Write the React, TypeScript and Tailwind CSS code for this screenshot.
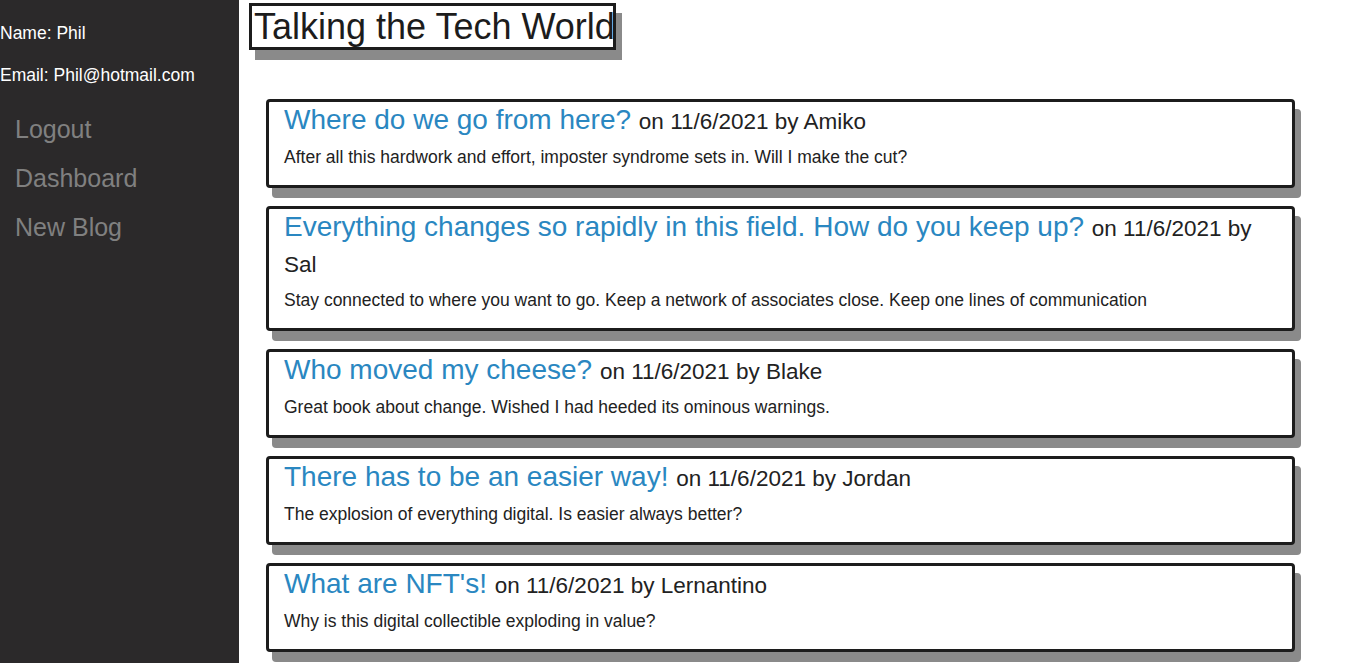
import React from "react";

interface Post {
  title: string;
  date: string;
  author: string;
  body: string;
}

const posts: Post[] = [
  {
    title: "Where do we go from here?",
    date: "11/6/2021",
    author: "Amiko",
    body: "After all this hardwork and effort, imposter syndrome sets in. Will I make the cut?",
  },
  {
    title: "Everything changes so rapidly in this field. How do you keep up?",
    date: "11/6/2021",
    author: "Sal",
    body: "Stay connected to where you want to go. Keep a network of associates close. Keep one lines of communication",
  },
  {
    title: "Who moved my cheese?",
    date: "11/6/2021",
    author: "Blake",
    body: "Great book about change. Wished I had heeded its ominous warnings.",
  },
  {
    title: "There has to be an easier way!",
    date: "11/6/2021",
    author: "Jordan",
    body: "The explosion of everything digital. Is easier always better?",
  },
  {
    title: "What are NFT's!",
    date: "11/6/2021",
    author: "Lernantino",
    body: "Why is this digital collectible exploding in value?",
  },
];

export default function App() {
  return (
    <div className="flex min-h-screen font-['Liberation_Sans',Arial,sans-serif] text-[#222]">
      {/* Sidebar */}
      <aside className="w-[239px] shrink-0 bg-[#2b292a] text-white">
        <p className="pt-[23px] text-[17.5px] leading-[20px]">Name: Phil</p>
        <p className="mt-[22px] text-[17.5px] leading-[20px]">Email: Phil@hotmail.com</p>
        <nav className="mt-[20px] flex flex-col pl-[15px]">
          {["Logout", "Dashboard", "New Blog"].map((l) => (
            <a key={l} href="#" className="text-[25px] leading-[49px] text-[#808080]">
              {l}
            </a>
          ))}
        </nav>
      </aside>

      {/* Main */}
      <main className="flex-1 pl-[10px] pt-[3px]">
        <h1 className="inline-block w-[367px] whitespace-nowrap border-[3px] border-[#1c1c1c] bg-white pl-[2px] text-[36px] leading-[41px] text-[#1c1c1c] shadow-[6px_10px_0_#8a8a8a]">
          Talking the Tech World
        </h1>

        <div className="mt-[49px] ml-[17px] w-[1029px] flex flex-col gap-[18px] pb-[12px]">
          {posts.map((p) => (
            <article
              key={p.title}
              className="rounded-[4px] border-[3px] border-[#1c1c1c] bg-white px-[15px] shadow-[6px_10px_0_#8a8a8a]"
            >
              <h2 className="text-[28px] leading-[36px]">
                <a href="#" className="text-[#2a87c1]">
                  {p.title}
                </a>{" "}
                <span className="text-[22.5px] leading-none text-[#222]">
                  on {p.date} by {p.author}
                </span>
              </h2>
              <p className="mt-[9px] mb-[18px] text-[17.5px] leading-[20px] text-[#222]">{p.body}</p>
            </article>
          ))}
        </div>
      </main>
    </div>
  );
}
